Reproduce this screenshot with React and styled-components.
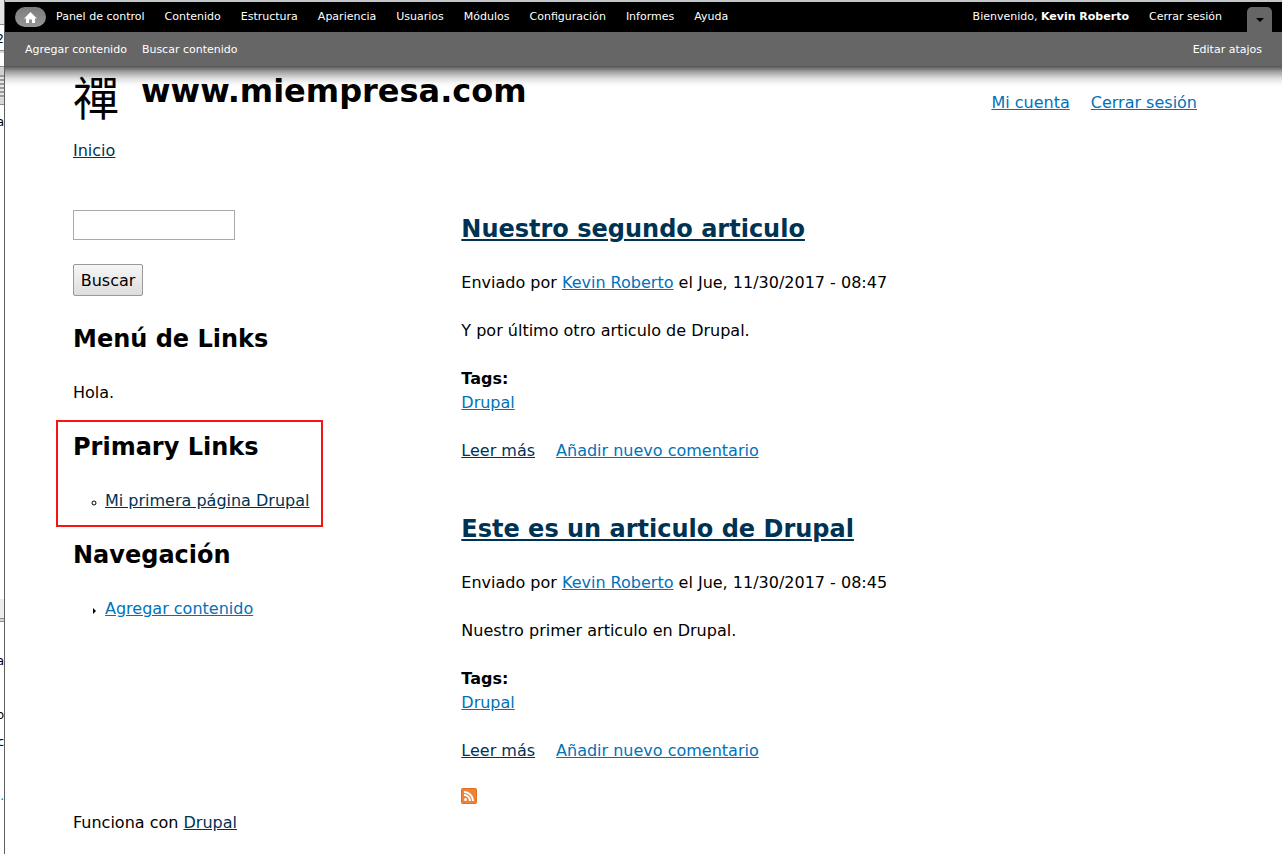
import React from "react";
import styled, { createGlobalStyle } from "styled-components";

const GlobalStyle = createGlobalStyle`
  *, *::before, *::after { box-sizing: border-box; }
  body {
    margin: 0;
    background: #fff;
    color: #000;
    font-family: Verdana, "DejaVu Sans", sans-serif;
    font-size: 16px;
    line-height: 24px;
  }
  h1, h2, p, ul { margin: 0; padding: 0; }
  ul { list-style: none; }
`;

const Shell = styled.div`
  display: grid;
  grid-template-columns: 5px minmax(0, 1fr);
  min-height: 100vh;
`;

/* Edge of the window that lies behind the browser */
const Behind = styled.div`
  display: flex;
  flex-direction: column;
  overflow: hidden;
  height: 100vh;
  min-height: 100%;
  border-right: 1px solid #5f5f5f;
  background: #fff;
`;

const Band = styled.div`
  flex: none;
  height: ${(p) => p.$h}px;
  background: ${(p) => p.$bg || "#fff"};
  border-bottom: ${(p) => (p.$line ? "1px solid #8c8c8c" : "0")};
`;

const Clipped = styled.div`
  flex: none;
  display: flex;
  justify-content: flex-end;
  height: ${(p) => p.$h}px;
  font-size: 12px;
  line-height: 16px;
  color: ${(p) => p.$color || "#000"};
`;

const Window = styled.div`
  border-top: 2px solid #c4c7c9;
`;

const Toolbar = styled.div`
  position: relative;
  font-size: 11px;
  line-height: 20px;
  color: #fff;

  &::after {
    content: "";
    position: absolute;
    top: 100%;
    left: 0;
    right: 0;
    height: 20px;
    pointer-events: none;
    background: linear-gradient(
      rgba(0, 0, 0, 0.62),
      rgba(0, 0, 0, 0.36) 25%,
      rgba(0, 0, 0, 0.14) 55%,
      rgba(0, 0, 0, 0.04) 80%,
      rgba(0, 0, 0, 0)
    );
  }
`;

const MenuBar = styled.div`
  display: flex;
  align-items: center;
  justify-content: space-between;
  height: 30px;
  padding: 0 10px;
  background: #000;
`;

const Drawer = styled(MenuBar)`
  height: 35px;
  padding: 1px 20px 0;
  background: #666;
  border-bottom: 1px solid #5a5a5a;
`;

const ToolbarList = styled.ul`
  display: flex;
  align-items: center;
  gap: ${(p) => p.$gap}px;
`;

const ToolbarLink = styled.a`
  color: #fff;
  text-decoration: none;
  white-space: nowrap;
`;

const MenuGroup = styled.nav`
  display: flex;
  align-items: center;
  gap: 10px;
`;

const HomeLink = styled.a`
  display: flex;
  align-items: center;
  justify-content: center;
  width: 31px;
  height: 20px;
  border-radius: 10px;
  background: linear-gradient(#7c7c7c, #969696);
`;

const UserGroup = styled.div`
  display: flex;
  align-items: center;
  gap: 25px;
  height: 100%;
`;

const DrawerToggle = styled.button`
  align-self: flex-end;
  display: flex;
  align-items: center;
  justify-content: center;
  width: 25px;
  height: 25px;
  padding: 0;
  border: 0;
  border-radius: 5px 5px 0 0;
  background: #666;
`;

const PageArea = styled.div`
  padding-left: 4px;
`;

const Page = styled.div`
  max-width: 1165px;
  margin: 0 auto;
`;

const Header = styled.header`
  display: flex;
  justify-content: space-between;
  padding: 0 31px 0 10px;
`;

const Brand = styled.div`
  display: flex;
  gap: 20px;
  height: 60px;
`;

const Logo = styled.a`
  width: 48px;
  padding-top: 4px;
  color: #000;
  text-decoration: none;
  font-family: "Noto Sans CJK TC", sans-serif;
  font-weight: 400;
  font-size: 46px;
  line-height: 48px;
`;

const SiteName = styled.h1`
  font-size: 32px;
  line-height: 48px;
`;

const SiteLink = styled.a`
  color: #000;
  text-decoration: none;
`;

const Link = styled.a`
  color: ${(p) => (p.$visited ? "#003353" : "#0072b9")};
  text-decoration: underline;
`;

const LinkRow = styled.ul`
  display: flex;
  gap: 21px;
`;

const UserLinks = styled.nav`
  padding-top: 24px;
`;

const Breadcrumb = styled.nav`
  padding: 12px 10px 47px;
`;

const Columns = styled.div`
  display: grid;
  grid-template-columns: minmax(0, 1fr) minmax(0, 2fr);
`;

const Stack = styled.div`
  display: flex;
  flex-direction: column;
  align-items: flex-start;
  gap: 24px;
  padding: 0 10px;
`;

const Content = styled(Stack).attrs({ as: "main" })`
  gap: 26px;
  padding-top: 1px;
`;

const SearchForm = styled.form`
  display: flex;
  flex-direction: column;
  align-items: flex-start;
  gap: 24px;
  padding-bottom: 1px;
`;

const SearchBox = styled.input`
  width: 162px;
  height: 30px;
  padding: 2px;
  border: 1px solid #a9a9a9;
  background: #fff;
  font: inherit;
`;

const SearchButton = styled.button`
  width: 70px;
  height: 32px;
  padding: 2px 0 0;
  border: 1px solid #999;
  border-radius: 2px;
  background: linear-gradient(#f6f6f6, #dddddd);
  color: #000;
  font: inherit;
`;

const Block = styled.section`
  position: relative;
  display: flex;
  flex-direction: column;
  gap: 24px;
`;

/* Red frame drawn over the page round the block */
const Frame = styled.div`
  position: absolute;
  top: -9px;
  bottom: -14px;
  left: -17px;
  width: 267px;
  border: 2px solid #f81414;
  pointer-events: none;
`;

const Heading = styled.h2`
  font-size: 24px;
  line-height: 36px;
`;

const MenuItem = styled.li`
  display: flex;
  align-items: center;
  gap: 8px;
  padding-left: 18px;
`;

const Bullet = styled.svg`
  width: 6px;
  height: 6px;
  margin-top: 4px;
`;

const Article = styled.article`
  display: flex;
  flex-direction: column;
  gap: 24px;
  padding-bottom: 22px;
`;

const Feed = styled.a`
  display: block;
  height: 16px;
  margin-top: -24px;
`;

const Footer = styled.footer`
  padding: 8px 10px 20px;
`;

const menu = [
  "Panel de control", "Contenido", "Estructura", "Apariencia", "Usuarios",
  "Módulos", "Configuración", "Informes", "Ayuda",
];

const articles = [
  { title: "Nuestro segundo articulo", time: "08:47", body: "Y por último otro articulo de Drupal." },
  { title: "Este es un articulo de Drupal", time: "08:45", body: "Nuestro primer articulo en Drupal." },
];

function BackWindow() {
  return (
    <Behind aria-hidden="true">
      <Band $h={25} $bg="#e4e4e4" $line />
      <Band $h={6} />
      <Clipped $h={19}>2</Clipped>
      <Band $h={1} $bg="#8c8c8c" />
      <Band $h={2} $bg="#d8d8d8" />
      <Band $h={14} $line />
      <Band $h={8} $bg="#d2d2d2" />
      <Band $h={23} $bg="repeating-linear-gradient(#9a9a9a 0 2px, #e4e4e4 2px 4px)" />
      <Band $h={7} $bg="#d8d8d8" $line />
      <Band $h={9} />
      <Clipped $h={16}>ra</Clipped>
      <Band $h={469} $bg="#fff" />
      <Band $h={20} $bg="#ececec" $line />
      <Band $h={3} $bg="#d4d4d4" $line />
      <Band $h={31} />
      <Clipped $h={54}>a</Clipped>
      <Clipped $h={27}>o</Clipped>
      <Clipped $h={54}>c</Clipped>
      <Clipped $h={16} $color="#0066cc">o.</Clipped>
    </Behind>
  );
}

function AdminToolbar() {
  return (
    <Toolbar>
      <MenuBar>
        <MenuGroup>
          <HomeLink href="#" aria-label="Inicio">
            <svg width="13" height="11" viewBox="0 0 13 11" fill="#fff">
              <path d="M6.5 0 0 6.5h2V11h3V7.500h3V11h3V6.500h2z" />
            </svg>
          </HomeLink>
          <ToolbarList $gap={20}>
            {menu.map((m) => (
              <li key={m}><ToolbarLink href="#">{m}</ToolbarLink></li>
            ))}
          </ToolbarList>
        </MenuGroup>
        <UserGroup>
          <ToolbarList $gap={20}>
            <li><ToolbarLink href="#">Bienvenido, <strong>Kevin Roberto</strong></ToolbarLink></li>
            <li><ToolbarLink href="#">Cerrar sesión</ToolbarLink></li>
          </ToolbarList>
          <DrawerToggle type="button" aria-label="Atajos">
            <svg width="8" height="4" viewBox="0 0 8 4"><path d="M0 0h8L4 4z" /></svg>
          </DrawerToggle>
        </UserGroup>
      </MenuBar>
      <Drawer>
        <ToolbarList $gap={15}>
          <li><ToolbarLink href="#">Agregar contenido</ToolbarLink></li>
          <li><ToolbarLink href="#">Buscar contenido</ToolbarLink></li>
        </ToolbarList>
        <ToolbarLink href="#">Editar atajos</ToolbarLink>
      </Drawer>
    </Toolbar>
  );
}

function Sidebar() {
  return (
    <Stack as="aside">
      <SearchForm onSubmit={(e) => e.preventDefault()}>
        <SearchBox type="text" aria-label="Buscar" />
        <SearchButton type="submit">Buscar</SearchButton>
      </SearchForm>
      <Block>
        <Heading>Menú de Links</Heading>
        <p>Hola.</p>
      </Block>
      <Block>
        <Heading>Primary Links</Heading>
        <ul>
          <MenuItem>
            <Bullet viewBox="0 0 6 6" fill="none" stroke="#000"><circle cx="3" cy="3" r="2" /></Bullet>
            <Link href="#" $visited>Mi primera página Drupal</Link>
          </MenuItem>
        </ul>
        <Frame />
      </Block>
      <Block>
        <Heading>Navegación</Heading>
        <ul>
          <MenuItem>
            <Bullet viewBox="0 0 6 6"><path d="M2 0v6l3-3z" /></Bullet>
            <Link href="#">Agregar contenido</Link>
          </MenuItem>
        </ul>
      </Block>
    </Stack>
  );
}

export default function App() {
  return (
    <>
      <GlobalStyle />
      <Shell>
        <BackWindow />
        <Window>
          <AdminToolbar />
          <PageArea>
            <Page>
              <Header>
                <Brand>
                  <Logo href="#">禪</Logo>
                  <SiteName><SiteLink href="#">www.miempresa.com</SiteLink></SiteName>
                </Brand>
                <UserLinks>
                  <LinkRow>
                    <li><Link href="#">Mi cuenta</Link></li>
                    <li><Link href="#">Cerrar sesión</Link></li>
                  </LinkRow>
                </UserLinks>
              </Header>
              <Breadcrumb><Link href="#" $visited>Inicio</Link></Breadcrumb>
              <Columns>
                <Sidebar />
                <Content>
                  {articles.map((a) => (
                    <Article key={a.title}>
                      <Heading><Link href="#" $visited>{a.title}</Link></Heading>
                      <p>Enviado por <Link href="#">Kevin Roberto</Link> el Jue, 11/30/2017 - {a.time}</p>
                      <p>{a.body}</p>
                      <div>
                        <p><strong>Tags:</strong></p>
                        <p><Link href="#">Drupal</Link></p>
                      </div>
                      <LinkRow>
                        <li><Link href="#" $visited>Leer más</Link></li>
                        <li><Link href="#">Añadir nuevo comentario</Link></li>
                      </LinkRow>
                    </Article>
                  ))}
                  <Feed href="#" aria-label="RSS">
                    <svg width="16" height="16" viewBox="0 0 16 16">
                      <rect width="16" height="16" rx="2" fill="#e07020" />
                      <rect x="1" y="1" width="14" height="14" rx="1" fill="#ee8238" />
                      <circle cx="4.5" cy="11.5" r="1.5" fill="#fff" />
                      <path d="M3 7a6 6 0 0 1 6 6M3 4a9 9 0 0 1 9 9" fill="none" stroke="#fff" strokeWidth="2" />
                    </svg>
                  </Feed>
                </Content>
              </Columns>
              <Footer>Funciona con <Link href="#" $visited>Drupal</Link></Footer>
            </Page>
          </PageArea>
        </Window>
      </Shell>
    </>
  );
}
